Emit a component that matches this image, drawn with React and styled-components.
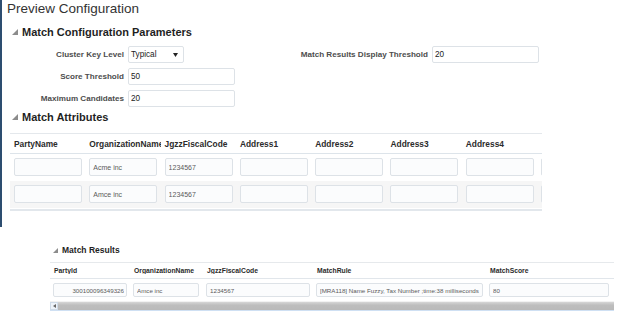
import React from "react";
import styled, { createGlobalStyle } from "styled-components";

const GlobalStyle = createGlobalStyle`
  html, body { margin: 0; padding: 0; background: #ffffff; }
  body { font-family: "Liberation Sans", Arial, Helvetica, sans-serif; }
  * { box-sizing: border-box; }
`;

const Page = styled.div`
  width: 618px;
  height: 321px;
  overflow: hidden;
  display: flex;
  flex-direction: column;
`;

const ConfigPanel = styled.section`
  height: 227px;
  border-left: 2px solid #2d4d70;
  padding-left: 5px;
  display: flex;
  flex-direction: column;
`;

const Title = styled.h1`
  margin: 0;
  font-size: 13.5px;
  line-height: 17px;
  font-weight: 400;
  color: #333333;
`;

const SectionHeader = styled.h2`
  margin: ${(p) => p.$mt}px 0 0;
  padding-left: ${(p) => p.$indent}px;
  height: ${(p) => p.$h}px;
  display: flex;
  align-items: center;
  gap: ${(p) => p.$gap}px;
  font-size: ${(p) => p.$size}px;
  font-weight: 700;
  color: #1f1f1f;
  white-space: nowrap;
`;

const Disclosure = ({ size }) => (
  <svg width={size} height={size} viewBox="0 0 6 6" aria-hidden="true">
    <polygon points="6,0 6,6 0,6" fill="#8c8c8c" />
  </svg>
);

const FormGrid = styled.div`
  margin-top: 7px;
  display: grid;
  grid-template-columns: 117px 107px 189px 107px;
  grid-auto-rows: 17px;
  column-gap: 4px;
  row-gap: 5px;
`;

const FieldLabel = styled.label`
  grid-column: ${(p) => p.$col};
  grid-row: ${(p) => p.$row};
  align-self: center;
  text-align: right;
  white-space: nowrap;
  font-size: 8.1px;
  font-weight: 700;
  color: #4d4d4d;
`;

const FieldInput = styled.input`
  grid-column: ${(p) => p.$col};
  grid-row: ${(p) => p.$row};
  width: 107px;
  height: 17px;
  margin: 0;
  padding: 0 0 0 2px;
  border: 1px solid #dde2e7;
  border-radius: 2px;
  background: #ffffff;
  font-family: inherit;
  font-size: 8.2px;
  color: #222222;
  outline: none;
`;

const SelectBox = styled.div`
  grid-column: 2;
  grid-row: 1;
  width: 56px;
  height: 17px;
  display: flex;
  align-items: center;
  justify-content: space-between;
  padding: 0 5px 0 2px;
  border: 1px solid #dde2e7;
  border-radius: 2px;
  background: #ffffff;
  font-size: 8.2px;
  color: #222222;
`;

const AttrTable = styled.div`
  margin: 9px 0 0 3px;
  width: 532px;
  overflow: hidden;
  border-top: 1px solid #e4e8ec;
  border-bottom: 2px solid #e2e7ec;
  padding-bottom: 1px;
`;

const AttrRow = styled.div`
  width: max-content;
  display: grid;
  grid-template-columns: repeat(8, 75.3px);
  align-items: center;
  padding: ${(p) => (p.$head ? "0" : "4px 0 5px")};
  height: ${(p) => (p.$head ? "20px" : "auto")};
  border-bottom: ${(p) => (p.$head ? "1px solid #dde4ea" : "none")};
  background: ${(p) => (p.$alt ? "#f6f6f6" : "#ffffff")};
`;

const HeadCell = styled.div`
  position: relative;
  padding-left: 4px;
  overflow: hidden;
  white-space: nowrap;
  font-size: ${(p) => p.$size}px;
  font-weight: 700;
  color: #2b2b2b;
`;

const SplitMark = styled.span`
  position: absolute;
  left: 3px;
  top: -3px;
  width: 1px;
  height: 6px;
  background: #f3dc7a;
`;

const Cell = styled.div`
  padding-left: ${(p) => p.$pad}px;
`;

const CellInput = styled.input`
  display: block;
  width: ${(p) => p.$w}px;
  height: ${(p) => p.$h}px;
  margin: 0;
  padding: ${(p) => (p.$right ? "0 2px 0 0" : "0 0 0 3px")};
  text-align: ${(p) => (p.$right ? "right" : "left")};
  border: 1px solid #dde2e7;
  border-radius: 2px;
  background: #fbfcfd;
  font-family: inherit;
  font-size: ${(p) => p.$size}px;
  color: #5a5a5a;
  outline: none;
`;

const ResultsPanel = styled.section`
  margin-top: 17px;
  padding-left: 50px;
  display: flex;
  flex-direction: column;
`;

const ResultsTable = styled.div`
  margin-top: 6px;
  width: 564px;
  border-top: 1px solid #e6e9ec;
`;

const ResultsRow = styled.div`
  display: grid;
  grid-template-columns: 80px 73px 110px 173px 128px;
  align-items: center;
  height: ${(p) => (p.$head ? "16px" : "auto")};
  padding: ${(p) => (p.$head ? "0" : "4px 0 3px")};
  border-bottom: ${(p) => (p.$head ? "1px solid #e1e6eb" : "none")};
`;

const ScrollBar = styled.div`
  margin-top: 1px;
  width: 564px;
  height: 10px;
  display: flex;
  border-top: 1px solid #f2f2f2;
  border-bottom: 1px solid #cfe0f3;
`;

const ScrollButton = styled.div`
  width: 8px;
  display: flex;
  align-items: center;
  justify-content: center;
  background: #eef3f9;
  border: 1px solid #cfdbe8;
`;

const ScrollTrack = styled.div`
  flex: 1;
  background: linear-gradient(#d6d6d6, #bdbdbd 40%, #bababa);
`;

const attrHeaders = [
  "PartyName",
  "OrganizationName",
  "JgzzFiscalCode",
  "Address1",
  "Address2",
  "Address3",
  "Address4",
];

const attrRows = [
  ["", "Acme inc", "1234567", "", "", "", "", ""],
  ["", "Amce inc", "1234567", "", "", "", "", ""],
];

const resultCols = [
  { name: "PartyId", w: 74, value: "300100096349326", right: true },
  { name: "OrganizationName", w: 66, value: "Amce inc" },
  { name: "JgzzFiscalCode", w: 104, value: "1234567" },
  { name: "MatchRule", w: 167, value: "[MRA118] Name Fuzzy, Tax Number ;time:38 milliseconds" },
  { name: "MatchScore", w: 120, value: "80" },
];

export default function App() {
  return (
    <>
      <GlobalStyle />
      <Page>
        <ConfigPanel>
          <Title>Preview Configuration</Title>
          <SectionHeader $mt={8} $h={14} $indent={5} $gap={4} $size={11}>
            <Disclosure size={6} />
            Match Configuration Parameters
          </SectionHeader>
          <FormGrid>
            <FieldLabel $col={1} $row={1}>Cluster Key Level</FieldLabel>
            <SelectBox>
              <span>Typical</span>
              <svg width="5" height="4" viewBox="0 0 5 4" aria-hidden="true">
                <polygon points="0,0 5,0 2.5,4" fill="#222" />
              </svg>
            </SelectBox>
            <FieldLabel $col={3} $row={1}>Match Results Display Threshold</FieldLabel>
            <FieldInput $col={4} $row={1} readOnly value="20" />
            <FieldLabel $col={1} $row={2}>Score Threshold</FieldLabel>
            <FieldInput $col={2} $row={2} readOnly value="50" />
            <FieldLabel $col={1} $row={3}>Maximum Candidates</FieldLabel>
            <FieldInput $col={2} $row={3} readOnly value="20" />
          </FormGrid>
          <SectionHeader $mt={3} $h={14} $indent={5} $gap={4} $size={11}>
            <Disclosure size={6} />
            Match Attributes
          </SectionHeader>
          <AttrTable>
            <AttrRow $head>
              {attrHeaders.map((h) => (
                <HeadCell key={h} $size={8.4}>{h}</HeadCell>
              ))}
              <HeadCell $size={8.4}>
                <SplitMark />
              </HeadCell>
            </AttrRow>
            {attrRows.map((row, i) => (
              <AttrRow key={i} $alt={i % 2 === 1}>
                {row.map((v, j) => (
                  <Cell key={j} $pad={4}>
                    <CellInput $w={68} $h={18} $size={7} readOnly value={v} />
                  </Cell>
                ))}
              </AttrRow>
            ))}
          </AttrTable>
        </ConfigPanel>
        <ResultsPanel>
          <SectionHeader $mt={0} $h={12} $indent={3} $gap={4} $size={8.5}>
            <Disclosure size={5} />
            Match Results
          </SectionHeader>
          <ResultsTable>
            <ResultsRow $head>
              {resultCols.map((c) => (
                <HeadCell key={c.name} $size={6.8}>{c.name}</HeadCell>
              ))}
            </ResultsRow>
            <ResultsRow>
              {resultCols.map((c) => (
                <Cell key={c.name} $pad={3}>
                  <CellInput $w={c.w} $h={14} $size={6.2} $right={c.right} readOnly value={c.value} />
                </Cell>
              ))}
            </ResultsRow>
          </ResultsTable>
          <ScrollBar>
            <ScrollButton>
              <svg width="3" height="4" viewBox="0 0 3 4" aria-hidden="true">
                <polygon points="3,0 3,4 0,2" fill="#666" />
              </svg>
            </ScrollButton>
            <ScrollTrack />
          </ScrollBar>
        </ResultsPanel>
      </Page>
    </>
  );
}
